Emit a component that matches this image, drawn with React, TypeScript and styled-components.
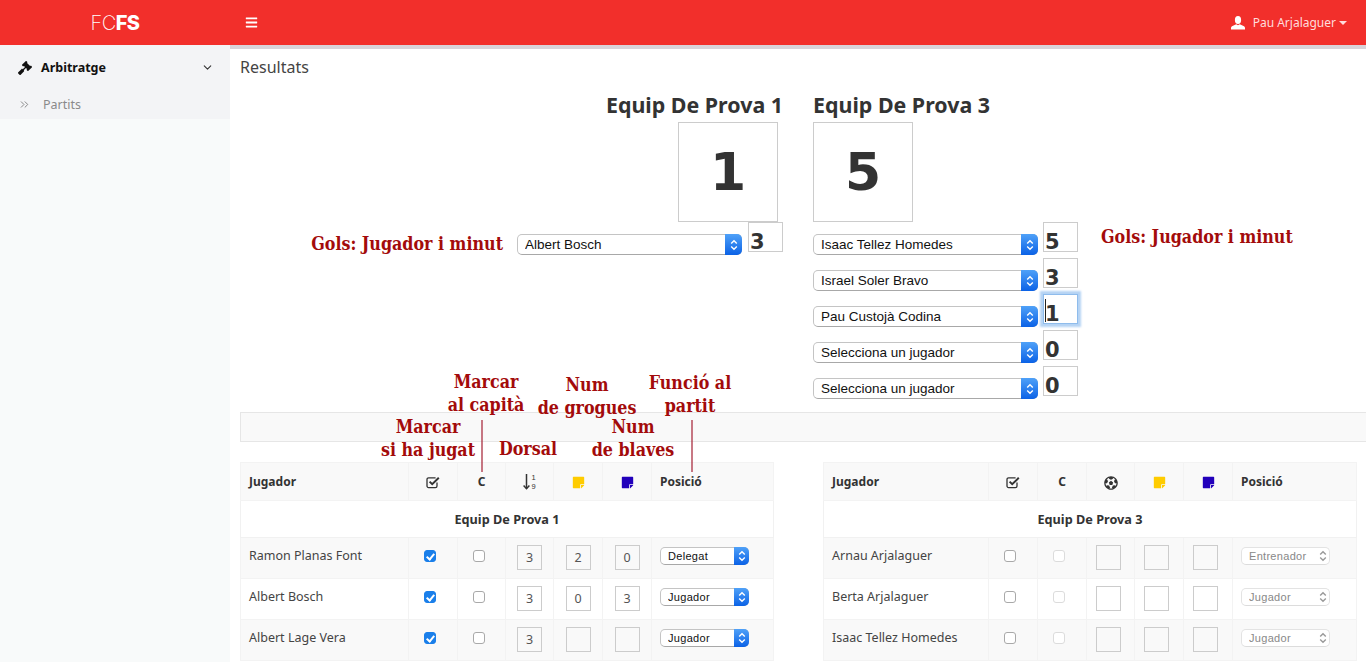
import React, { FC } from "react";
import styled, { createGlobalStyle } from "styled-components";
import { FaBars, FaFutbol, FaGavel, FaStickyNote } from "react-icons/fa";
import { ChevronDown, ChevronsRight } from "lucide-react";

const YELLOW = "#ffcc00";
const BLUE = "#2200bb";
const NOTE_RED = "#a30b0b";

interface Player {
  name: string;
  played: boolean;
  numbers: string[];
  role: string;
}

const homePlayers: Player[] = [
  { name: "Ramon Planas Font", played: true, numbers: ["3", "2", "0"], role: "Delegat" },
  { name: "Albert Bosch", played: true, numbers: ["3", "0", "3"], role: "Jugador" },
  { name: "Albert Lage Vera", played: true, numbers: ["3", "", ""], role: "Jugador" },
];

const awayPlayers: Player[] = [
  { name: "Arnau Arjalaguer", played: false, numbers: ["", "", ""], role: "Entrenador" },
  { name: "Berta Arjalaguer", played: false, numbers: ["", "", ""], role: "Jugador" },
  { name: "Isaac Tellez Homedes", played: false, numbers: ["", "", ""], role: "Jugador" },
];

const awayGoals = [
  { name: "Isaac Tellez Homedes", goals: "5" },
  { name: "Israel Soler Bravo", goals: "3" },
  { name: "Pau Custojà Codina", goals: "1", focused: true },
  { name: "Selecciona un jugador", goals: "0" },
  { name: "Selecciona un jugador", goals: "0" },
];

const notes = [
  { x: 486, y: 370, lines: ["Marcar", "al capità"] },
  { x: 587, y: 373, lines: ["Num", "de grogues"] },
  { x: 690, y: 371, lines: ["Funció al", "partit"] },
  { x: 428, y: 415, lines: ["Marcar", "si ha jugat"] },
  { x: 528, y: 437, lines: ["Dorsal"] },
  { x: 633, y: 415, lines: ["Num", "de blaves"] },
];

const Chevrons: FC = () => (
  <svg width="8" height="12" viewBox="0 0 8 12" fill="none" stroke="currentColor" strokeWidth="1.4">
    <path d="M1.2 4.6L4 1.8l2.8 2.8" />
    <path d="M1.2 7.4L4 10.2l2.8-2.8" />
  </svg>
);

// the square of the old font-awesome check-square-o, open at the top right
const CheckSquareIcon: FC = () => (
  <svg width="15" height="13" viewBox="0 0 15 13" fill="none" stroke="#333">
    <path d="M11 6.5V10a1.6 1.6 0 0 1-1.6 1.6H2.6A1.6 1.6 0 0 1 1 10V3.4a1.6 1.6 0 0 1 1.6-1.6h7" strokeWidth="1.3" />
    <path d="M3.6 5.6l2.6 2.6 6.6-6.4" strokeWidth="2" />
  </svg>
);

const UserIcon: FC = () => (
  <svg width="14" height="14" viewBox="0 0 14 14" fill="#fff">
    <ellipse cx="7" cy="4" rx="3.1" ry="4" />
    <path d="M5.2 8.2L1 10.2C.3 10.6 0 11.2 0 12v1.4h14V12c0-.8-.3-1.4-1-1.8L8.8 8.2 7 9.2z" />
  </svg>
);

const SortIcon: FC = () => (
  <SortWrap>
    <svg width="7" height="16" viewBox="0 0 7 16" fill="none" stroke="#333" strokeWidth="1.5">
      <path d="M3.5 0v14.5" />
      <path d="M.6 11.5l2.9 3.2 2.9-3.2" />
    </svg>
    <SortDigits>
      <span>1</span>
      <span>9</span>
    </SortDigits>
  </SortWrap>
);

const MacSelect: FC<{ value: string; small?: boolean; disabled?: boolean }> = ({
  value,
  small,
  disabled,
}) => (
  <SelectWrap $small={small}>
    <NativeSelect $small={small} $disabled={disabled} defaultValue={value} disabled={disabled}>
      <option>{value}</option>
    </NativeSelect>
    <SelectArrow $small={small} $disabled={disabled}>
      <Chevrons />
    </SelectArrow>
  </SelectWrap>
);

const GoalInput: FC<{ value: string; focused?: boolean }> = ({ value, focused }) => (
  <GoalBox>
    <GoalField $focused={focused}>{value}</GoalField>
    {focused && <TextCaret />}
  </GoalBox>
);

const PlayersTable: FC<{
  team: string;
  players: Player[];
  widths: number[];
  away?: boolean;
}> = ({ team, players, widths, away }) => (
  <Table>
    <colgroup>
      {widths.map((w, i) => (
        <col key={i} style={{ width: w }} />
      ))}
    </colgroup>
    <thead>
      <tr>
        <HeadCell>Jugador</HeadCell>
        <HeadCell $center>
          <CheckSquareIcon />
        </HeadCell>
        <HeadCell $center>C</HeadCell>
        <HeadCell $center>{away ? <FaFutbol size={14} /> : <SortIcon />}</HeadCell>
        <HeadCell $center>
          <FaStickyNote size={13} color={YELLOW} />
        </HeadCell>
        <HeadCell $center>
          <FaStickyNote size={13} color={BLUE} />
        </HeadCell>
        <HeadCell>Posició</HeadCell>
      </tr>
    </thead>
    <tbody>
      <tr>
        <TeamCell colSpan={7}>{team}</TeamCell>
      </tr>
      {players.map((p) => (
        <PlayerRow key={p.name}>
          <NameCell>{p.name}</NameCell>
          <CheckCell>
            <Check type="checkbox" defaultChecked={p.played} />
          </CheckCell>
          <CheckCell>
            <Check type="checkbox" disabled={away} />
          </CheckCell>
          {p.numbers.map((n, i) => (
            <NumberCell key={i} $away={away}>
              <NumberField defaultValue={n} readOnly />
            </NumberCell>
          ))}
          <RoleCell>
            <MacSelect value={p.role} small disabled={away} />
          </RoleCell>
        </PlayerRow>
      ))}
    </tbody>
  </Table>
);

const App: FC = () => (
  <>
    <GlobalStyle />
    <Page>
      <TopBar>
        <Brand>
          <BrandThin>FC</BrandThin>
          <BrandBold>FS</BrandBold>
        </Brand>
        <TopBarMain>
          <FaBars size={13} color="#fff" />
          <UserMenu>
            <UserIcon />
            <UserName>Pau Arjalaguer</UserName>
            <Caret />
          </UserMenu>
        </TopBarMain>
      </TopBar>

      <Body>
        <Sidebar>
          <SideGroup>
            <SideHeader>
              <FaGavel size={14} color="#111" />
              <SideTitle>Arbitratge</SideTitle>
              <ChevronDown size={13} color="#333" strokeWidth={2} />
            </SideHeader>
            <SideItem>
              <ChevronsRight size={13} color="#777" strokeWidth={1.6} />
              <span>Partits</span>
            </SideItem>
          </SideGroup>
        </Sidebar>

        <Main>
          <PageTitle>Resultats</PageTitle>

          <Scores>
            <TeamColumn $home>
              <TeamName>Equip De Prova 1</TeamName>
              <ScoreBox $home>1</ScoreBox>
              <GoalRow $wide>
                <GoalsLabel $home>Gols: Jugador i minut</GoalsLabel>
                <MacSelect value="Albert Bosch" />
                <GoalInput value="3" />
              </GoalRow>
            </TeamColumn>

            <TeamColumn>
              <TeamName>Equip De Prova 3</TeamName>
              <ScoreBox>5</ScoreBox>
              <GoalBlock>
                <div>
                  {awayGoals.map((g, i) => (
                    <GoalRow key={i}>
                      <MacSelect value={g.name} />
                      <GoalInput value={g.goals} focused={g.focused} />
                    </GoalRow>
                  ))}
                </div>
                <GoalsLabel>Gols: Jugador i minut</GoalsLabel>
              </GoalBlock>
            </TeamColumn>
          </Scores>

          <Band />

          <Tables>
            <PlayersTable
              team="Equip De Prova 1"
              players={homePlayers}
              widths={[168, 49, 48, 48, 49, 49, 122]}
            />
            <PlayersTable
              team="Equip De Prova 3"
              players={awayPlayers}
              widths={[165, 49, 49, 48, 49, 49, 124]}
              away
            />
          </Tables>
        </Main>
      </Body>

      {notes.map((n) => (
        <Note key={n.lines[0] + n.x} $x={n.x} $y={n.y}>
          {n.lines.map((l) => (
            <div key={l}>{l}</div>
          ))}
        </Note>
      ))}
      <LeaderLine $x={481} />
      <LeaderLine $x={691} />
    </Page>
  </>
);

const GlobalStyle = createGlobalStyle`
  html, body {
    margin: 0;
    height: 100%;
    overflow: hidden;
    background: #fff;
  }

  body {
    font-family: "Noto Sans", "Open Sans", sans-serif;
    font-size: 13px;
    color: #333;
  }
`;

const Page = styled.div`
  position: relative;
  height: 662px;
  overflow: hidden;
`;

const TopBar = styled.header`
  display: flex;
  height: 45px;
  background: #f22f2b;
`;

const Brand = styled.div`
  display: flex;
  justify-content: center;
  align-items: center;
  width: 230px;
  font-family: "Inter", "Liberation Sans", sans-serif;
  font-size: 20px;
  letter-spacing: -0.5px;
  color: #fff;
`;

const BrandThin = styled.span`
  font-weight: 200;
`;

const BrandBold = styled.span`
  font-weight: 800;
`;

const TopBarMain = styled.div`
  flex: 1;
  display: flex;
  justify-content: space-between;
  align-items: center;
  padding: 0 19px 0 15px;
`;

const UserMenu = styled.div`
  display: flex;
  align-items: center;
`;

const UserName = styled.span`
  margin-left: 8px;
  font-size: 12px;
  color: #ffdcdc;
`;

const Caret = styled.span`
  width: 0;
  height: 0;
  margin-left: 3px;
  border-top: 4px solid #ffdcdc;
  border-left: 4px solid transparent;
  border-right: 4px solid transparent;
`;

const Body = styled.div`
  display: flex;
  height: 617px;
`;

const Sidebar = styled.aside`
  flex: 0 0 230px;
  background: #f8fafa;
`;

const SideGroup = styled.nav`
  height: 74px;
  background: #f3f4f6;
`;

const SideHeader = styled.div`
  display: flex;
  align-items: center;
  height: 45px;
  padding: 0 16px 0 18px;
`;

const SideTitle = styled.span`
  flex: 1;
  margin-left: 9px;
  font-size: 12.5px;
  font-weight: 700;
  color: #111;
`;

const SideItem = styled.div`
  display: flex;
  align-items: center;
  gap: 12px;
  height: 29px;
  padding-left: 18px;
  font-size: 12.5px;
  color: #8a8a8a;
`;

const Main = styled.main`
  flex: 1;
  min-width: 0;
  padding-left: 10px;
  border-top: 4px solid #d9d3d9;
  overflow: hidden;
`;

const PageTitle = styled.h1`
  margin: 0;
  height: 41px;
  font-size: 16px;
  font-weight: 400;
  line-height: 36px;
  color: #444;
`;

const Scores = styled.section`
  display: grid;
  grid-template-columns: 543px 1fr;
  column-gap: 30px;
`;

const TeamColumn = styled.div<{ $home?: boolean }>`
  display: flex;
  flex-direction: column;
  align-items: ${(p) => (p.$home ? "flex-end" : "flex-start")};
`;

const TeamName = styled.h2`
  margin: 0 0 2px;
  font-size: 21.4px;
  font-weight: 700;
  line-height: 30px;
  color: #333;
`;

const ScoreBox = styled.div<{ $home?: boolean }>`
  display: flex;
  justify-content: center;
  align-items: center;
  box-sizing: border-box;
  width: 100px;
  height: 100px;
  margin-right: ${(p) => (p.$home ? "5px" : "0")};
  border: 1px solid #ccc;
  font-family: "DejaVu Sans", "Noto Sans", sans-serif;
  font-size: 52px;
  font-weight: 700;
  color: #333;
`;

const GoalBlock = styled.div`
  display: flex;
  gap: 23px;
`;

const GoalRow = styled.div<{ $wide?: boolean }>`
  display: flex;
  gap: ${(p) => (p.$wide ? "6px" : "5px")};
  height: 36px;
`;

const GoalsLabel = styled.div<{ $home?: boolean }>`
  margin-top: ${(p) => (p.$home ? "10px" : "3px")};
  margin-right: ${(p) => (p.$home ? "8px" : "0")};
  font-family: "DejaVu Serif", "Liberation Serif", serif;
  font-size: 17.7px;
  font-stretch: condensed;
  font-weight: 700;
  line-height: 24px;
  white-space: nowrap;
  color: ${NOTE_RED};
`;

const SelectWrap = styled.span<{ $small?: boolean }>`
  position: relative;
  display: inline-block;
  width: ${(p) => (p.$small ? "89px" : "225px")};
  height: ${(p) => (p.$small ? "18px" : "21px")};
  margin-top: ${(p) => (p.$small ? "0" : "12px")};
`;

const NativeSelect = styled.select<{ $small?: boolean; $disabled?: boolean }>`
  appearance: none;
  display: block;
  box-sizing: border-box;
  width: 100%;
  height: 100%;
  margin: 0;
  padding: 0 0 0 7px;
  border: 1px solid ${(p) => (p.$disabled ? "#e3e3e3" : "#c4c4c4")};
  border-bottom-color: ${(p) => (p.$disabled ? "#dcdcdc" : "#a8a8a8")};
  border-radius: 5px;
  background: #fff;
  font-family: "Liberation Sans", Arial, sans-serif;
  font-size: ${(p) => (p.$small ? "11px" : "13.5px")};
  letter-spacing: ${(p) => (p.$small ? "0.3px" : "0")};
  color: ${(p) => (p.$disabled ? "#888" : "#111")};
  opacity: 1;
`;

const SelectArrow = styled.span<{ $small?: boolean; $disabled?: boolean }>`
  position: absolute;
  top: 0;
  right: 0;
  bottom: 0;
  display: flex;
  justify-content: center;
  align-items: center;
  width: ${(p) => (p.$small ? "15px" : "17px")};
  border-radius: 0 5px 5px 0;
  background: ${(p) => (p.$disabled ? "transparent" : "linear-gradient(#4fa1f8, #0b62e6)")};
  color: ${(p) => (p.$disabled ? "#999" : "#fff")};
`;

const GoalBox = styled.span`
  position: relative;
  display: inline-block;
  width: 35px;
  height: 30px;
`;

// plain text rather than an input: a 30px input clips digits set this low
const GoalField = styled.div<{ $focused?: boolean }>`
  box-sizing: border-box;
  width: 100%;
  height: 100%;
  padding: 8px 0 0 1px;
  border: 1px solid ${(p) => (p.$focused ? "#8fbcec" : "#ccc")};
  box-shadow: ${(p) => (p.$focused ? "0 0 2px 3px #b4d3f4" : "none")};
  font-family: "DejaVu Sans", "Noto Sans", sans-serif;
  font-size: 21px;
  line-height: 23px;
  font-weight: 700;
  color: #333;
`;

const TextCaret = styled.span`
  position: absolute;
  top: 5px;
  left: 2px;
  width: 1px;
  height: 23px;
  background: #222;
`;

const Band = styled.div`
  box-sizing: border-box;
  height: 30px;
  margin-top: 10px;
  border: 1px solid #e6e6e6;
  border-right: none;
  background: #f9f9f9;
`;

const Tables = styled.div`
  display: grid;
  grid-template-columns: 533px 533px;
  column-gap: 50px;
  margin-top: 20px;
`;

const Table = styled.table`
  width: 533px;
  border-collapse: collapse;
  table-layout: fixed;
  font-size: 12.5px;
`;

const HeadCell = styled.th<{ $center?: boolean }>`
  height: 37px;
  padding: 0 8px;
  border: 1px solid #f3f3f3;
  background: #f9f9f9;
  text-align: ${(p) => (p.$center ? "center" : "left")};
  font-size: 12px;
  font-weight: 700;
  color: #333;

  svg {
    display: inline-block;
    vertical-align: middle;
  }
`;

const SortWrap = styled.span`
  display: inline-flex;
  align-items: center;
  gap: 1px;
  vertical-align: middle;
`;

const SortDigits = styled.span`
  display: flex;
  flex-direction: column;
  font-family: "Liberation Sans", sans-serif;
  font-size: 7.5px;
  font-weight: 400;
  line-height: 9px;
`;

const TeamCell = styled.td`
  height: 36px;
  padding: 0;
  border: 1px solid #f1f1f1;
  text-align: center;
  font-size: 12.7px;
  font-weight: 700;
  color: #333;
`;

const PlayerRow = styled.tr`
  &:nth-child(even) td {
    background: #f9f9f9;
  }

  td {
    height: 41px;
    box-sizing: border-box;
    border: 1px solid #f3f3f3;
    vertical-align: top;
  }
`;

const NameCell = styled.td`
  padding: 9px 8px 0;
  white-space: nowrap;
  overflow: hidden;
  color: #444;
`;

const CheckCell = styled.td`
  padding: 12px 6px 0 0;
  text-align: center;
`;

const NumberCell = styled.td<{ $away?: boolean }>`
  padding: 7px ${(p) => (p.$away ? "5px" : "0")} 0 0;
`;

const RoleCell = styled.td`
  padding: 9px 0 0 8px;
`;

const Check = styled.input`
  appearance: none;
  position: relative;
  display: block;
  box-sizing: border-box;
  width: 12px;
  height: 12px;
  margin: 0 auto;
  border: 1px solid #a9a9a9;
  border-radius: 3px;
  background: #fff;

  &:disabled {
    border-color: #dcdcdc;
  }

  &:checked {
    border-color: #1a7fea;
    background: #1a7fea;
  }

  &:checked::after {
    content: "";
    position: absolute;
    left: 3px;
    top: 0.5px;
    width: 3px;
    height: 6px;
    border: solid #fff;
    border-width: 0 2px 2px 0;
    transform: rotate(40deg);
  }
`;

const NumberField = styled.input`
  display: block;
  box-sizing: border-box;
  width: 25px;
  height: 25px;
  margin: 0 auto;
  padding: 0;
  border: 1px solid #ccc;
  background: transparent;
  text-align: center;
  font-family: inherit;
  font-size: 12.5px;
  color: #555;
`;

const Note = styled.div<{ $x: number; $y: number }>`
  position: absolute;
  left: ${(p) => p.$x}px;
  top: ${(p) => p.$y}px;
  transform: translateX(-50%);
  font-family: "DejaVu Serif", "Liberation Serif", serif;
  font-size: 17.7px;
  font-stretch: condensed;
  font-weight: 700;
  line-height: 23px;
  white-space: nowrap;
  text-align: center;
  color: ${NOTE_RED};
`;

const LeaderLine = styled.div<{ $x: number }>`
  position: absolute;
  left: ${(p) => p.$x}px;
  top: 420px;
  width: 2px;
  height: 52px;
  background: rgba(163, 30, 50, 0.6);
`;

export default App;
